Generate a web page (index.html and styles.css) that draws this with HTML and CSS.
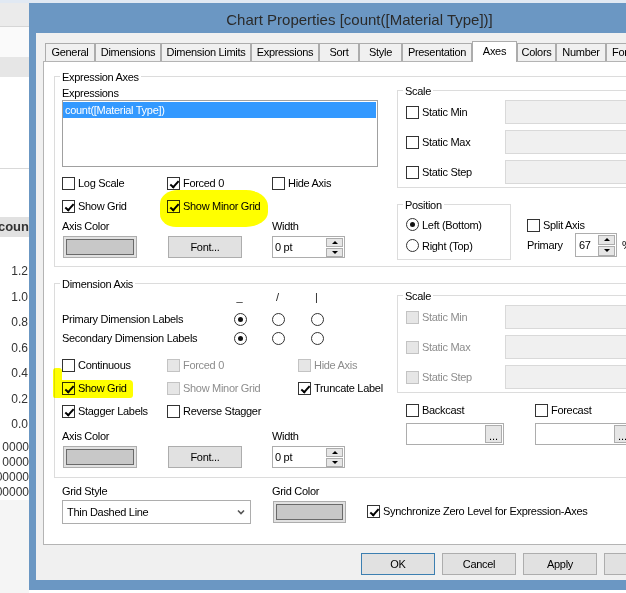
FILE: index.html
```html
<!DOCTYPE html>
<html>
<head>
<meta charset="utf-8">
<title>Chart Properties</title>
<link rel="stylesheet" href="styles.css">
</head>
<body>
<div class="topstrip"></div>
<div class="screen">
  <div class="bgapp">
    <div class="bg-toolbar"></div>
    <div class="bg-w1"></div>
    <div class="bg-band"></div>
    <div class="bg-w2"></div>
    <div class="bg-w3"></div>
    <div class="bg-head">coun</div>
    <div class="bg-gap"></div>
    <div class="bg-num">1.2</div>
    <div class="bg-num">1.0</div>
    <div class="bg-num">0.8</div>
    <div class="bg-num">0.6</div>
    <div class="bg-num">0.4</div>
    <div class="bg-num">0.2</div>
    <div class="bg-num">0.0</div>
    <div class="bg-gap2"></div>
    <div class="bg-row"><span>0000</span></div>
    <div class="bg-row"><span>0000</span></div>
    <div class="bg-row"><span>00000</span></div>
    <div class="bg-row"><span>00000</span></div>
  </div>

  <div class="dialog">
    <div class="titlebar">Chart Properties [count([Material Type])]</div>
    <div class="client">
      <div class="tabs">
        <div class="tab">General</div>
        <div class="tab">Dimensions</div>
        <div class="tab">Dimension Limits</div>
        <div class="tab">Expressions</div>
        <div class="tab">Sort</div>
        <div class="tab">Style</div>
        <div class="tab">Presentation</div>
        <div class="tab sel">Axes</div>
        <div class="tab">Colors</div>
        <div class="tab">Number</div>
        <div class="tab last">Font</div>
      </div>

      <div class="panel">
        <!-- Expression Axes -->
        <div class="group grp-main grp-expr">
          <span class="legend">Expression Axes</span>
          <div class="g-left expr-left">
            <div class="lbl lbl-expr">Expressions</div>
            <div class="listbox"><div class="listitem">count([Material Type])</div></div>
            <div class="cbgrid row13 mt10">
              <div class="chk"><span class="cb"></span>Log Scale</div>
              <div class="chk"><span class="cb on"></span>Forced 0</div>
              <div class="chk"><span class="cb"></span>Hide Axis</div>
            </div>
            <div class="cbgrid row13 mt10">
              <div class="chk"><span class="cb on"></span>Show Grid</div>
              <div class="chk"><span class="cb on"></span>Show Minor Grid</div>
            </div>
            <div class="cbgrid row13 mt7">
              <div class="lbl">Axis Color</div>
              <div></div>
              <div class="lbl">Width</div>
            </div>
            <div class="cbgrid ctrlrow">
              <div class="colorbtn"><span class="swatch"></span></div>
              <div class="btn">Font...</div>
              <div class="spin"><span class="spin-val">0 pt</span><span class="spin-btns"><span class="sb up"></span><span class="sb dn"></span></span></div>
            </div>
          </div>
          <div class="g-right">
            <div class="group scale scale-expr">
              <span class="legend">Scale</span>
              <div class="srow"><div class="chk swide"><span class="cb"></span>Static Min</div><div class="field"></div></div>
              <div class="srow"><div class="chk swide"><span class="cb"></span>Static Max</div><div class="field"></div></div>
              <div class="srow"><div class="chk swide"><span class="cb"></span>Static Step</div><div class="field"></div></div>
            </div>
            <div class="posrow">
              <div class="group pos">
                <span class="legend">Position</span>
                <div class="prow"><span class="rd on"></span>Left (Bottom)</div>
                <div class="prow"><span class="rd"></span>Right (Top)</div>
              </div>
              <div class="split">
                <div class="chk row13"><span class="cb"></span>Split Axis</div>
                <div class="prim-row">
                  <span class="prim-lbl">Primary</span>
                  <div class="spin tall"><span class="spin-val">67</span><span class="spin-btns"><span class="sb up"></span><span class="sb dn"></span></span></div>
                  <span class="pct">%</span>
                </div>
              </div>
            </div>
          </div>
        </div>

        <!-- Dimension Axis -->
        <div class="group grp-main grp-dim">
          <span class="legend">Dimension Axis</span>
          <div class="g-left dim-left">
            <div class="radgrid row13 hdr">
              <div></div><div class="hcell">_</div><div class="hcell">/</div><div class="hcell">|</div>
            </div>
            <div class="radgrid row13 mt9">
              <div class="lbl">Primary Dimension Labels</div>
              <span class="rd on"></span><span class="rd"></span><span class="rd"></span>
            </div>
            <div class="radgrid row13 mt6">
              <div class="lbl">Secondary Dimension Labels</div>
              <span class="rd on"></span><span class="rd"></span><span class="rd"></span>
            </div>
            <div class="cbgrid dimcols row13 mt14">
              <div class="chk"><span class="cb"></span>Continuous</div>
              <div class="chk dis"><span class="cb dis"></span>Forced 0</div>
              <div class="chk dis"><span class="cb dis"></span>Hide Axis</div>
            </div>
            <div class="cbgrid dimcols row13 mt10">
              <div class="chk"><span class="cb on"></span>Show Grid</div>
              <div class="chk dis"><span class="cb dis"></span>Show Minor Grid</div>
              <div class="chk"><span class="cb on"></span>Truncate Label</div>
            </div>
            <div class="cbgrid dimcols row13 mt10">
              <div class="chk"><span class="cb on"></span>Stagger Labels</div>
              <div class="chk"><span class="cb"></span>Reverse Stagger</div>
            </div>
            <div class="cbgrid row13 mt12">
              <div class="lbl">Axis Color</div>
              <div></div>
              <div class="lbl">Width</div>
            </div>
            <div class="cbgrid ctrlrow">
              <div class="colorbtn"><span class="swatch"></span></div>
              <div class="btn">Font...</div>
              <div class="spin"><span class="spin-val">0 pt</span><span class="spin-btns"><span class="sb up"></span><span class="sb dn"></span></span></div>
            </div>
          </div>
          <div class="g-right">
            <div class="group scale scale-dim">
              <span class="legend">Scale</span>
              <div class="srow"><div class="chk swide dis"><span class="cb dis"></span>Static Min</div><div class="field"></div></div>
              <div class="srow"><div class="chk swide dis"><span class="cb dis"></span>Static Max</div><div class="field"></div></div>
              <div class="srow"><div class="chk swide dis"><span class="cb dis"></span>Static Step</div><div class="field"></div></div>
            </div>
            <div class="castrow row13">
              <div class="chk castcol"><span class="cb"></span>Backcast</div>
              <div class="chk"><span class="cb"></span>Forecast</div>
            </div>
            <div class="castfields">
              <div class="bfield"><span class="dots">...</span></div>
              <div class="bfield"><span class="dots">...</span></div>
            </div>
          </div>
        </div>

        <!-- Grid style row -->
        <div class="gridrow">
          <div class="gcolA">
            <div class="lbl row13">Grid Style</div>
            <div class="dropdown">
              <span>Thin Dashed Line</span>
              <svg class="chev" width="8" height="6" viewBox="0 0 8 6"><polyline points="1,1.5 4,4.5 7,1.5" fill="none" stroke="#555" stroke-width="1.6"/></svg>
            </div>
          </div>
          <div class="gcolB">
            <div class="lbl row13">Grid Color</div>
            <div class="colorbtn gc"><span class="swatch"></span></div>
          </div>
          <div class="gcolC">
            <div class="chk row13"><span class="cb on"></span>Synchronize Zero Level for Expression-Axes</div>
          </div>
        </div>
      </div>

      <div class="dbuttons">
        <div class="dbtn def">OK</div>
        <div class="dbtn">Cancel</div>
        <div class="dbtn">Apply</div>
        <div class="dbtn">Help</div>
      </div>
    </div>
  </div>
</div>

<div class="hl hl-1"></div>
<div class="hl hl-2a"></div>
<div class="hl hl-2b"></div>
</body>
</html>
```

FILE: styles.css
```css
html, body {
  margin: 0;
  padding: 0;
}
body {
  width: 626px;
  height: 593px;
  overflow: hidden;
  background: #ffffff;
  font-family: "Liberation Sans", Arial, sans-serif;
  font-size: 11px;
  letter-spacing: -0.3px;
  color: #000;
  position: relative;
}

.topstrip {
  height: 3px;
  background: #e1e9f3;
}
.screen {
  display: flex;
  align-items: flex-start;
}

/* background application (left strip) */
.bgapp {
  width: 29px;
  height: 590px;
  flex: none;
  background: #f5f5f5;
  display: flex;
  flex-direction: column;
  overflow: hidden;
  letter-spacing: 0;
  color: #333;
}
.bg-toolbar { height: 23px; background: #ebebeb; border-bottom: 1px solid #d6d6d6; flex: none; }
.bg-w1 { height: 30px; background: #fafafa; flex: none; }
.bg-band { height: 20px; background: #e6e6e6; flex: none; }
.bg-w2 { height: 91px; background: #fff; border-bottom: 1px solid #d9d9d9; flex: none; }
.bg-w3 { height: 48px; background: #fff; flex: none; }
.bg-head {
  height: 20px; flex: none;
  background: #e1e1e1;
  font-weight: bold; font-size: 13px; line-height: 20px;
  display: flex; justify-content: flex-end;
  white-space: nowrap;
}
.bg-gap { height: 22px; background: #fff; flex: none; }
.bg-num {
  height: 25.5px; line-height: 25.5px; flex: none;
  background: #fff;
  text-align: right; font-size: 12px;
  padding-right: 1px;
}
.bg-gap2 { height: 2px; background: #fff; flex: none; }
.bg-row {
  height: 15px; line-height: 15px; flex: none;
  background: #fff;
  font-size: 12px;
  display: flex; justify-content: flex-end;
  white-space: nowrap;
}

/* dialog frame */
.dialog {
  width: 661px;
  height: 587px;
  flex: none;
  box-sizing: border-box;
  background: #6b97c3;
  padding: 0 7px 10px 7px;
}
.titlebar {
  height: 30px;
  box-sizing: border-box;
  padding-top: 3px;
  line-height: 27px;
  text-align: center;
  font-size: 15px;
  letter-spacing: 0;
  color: #2a2a2a;
}
.client {
  height: 547px;
  box-sizing: border-box;
  background: #f0f0f0;
  padding: 8px 0 0 7px;
}

/* tabs */
.tabs {
  display: grid;
  grid-template-columns: 50px 66px 90px 68px 40px 43px 70px 45px 39px 50px 60px;
  align-items: end;
  height: 20px;
  margin-left: 2px;
  position: relative;
  z-index: 2;
}
.tab {
  height: 18px;
  box-sizing: border-box;
  border: 1px solid #acacac;
  border-bottom: 0;
  background: #f0f0f0;
  text-align: center;
  line-height: 17px;
  white-space: nowrap;
  overflow: hidden;
}
.tab.sel {
  height: 21px;
  margin-bottom: -1px;
  background: #fff;
  line-height: 18px;
}
.tab.last {
  text-align: left;
  padding-left: 5px;
}

.panel {
  height: 484px;
  box-sizing: border-box;
  border: 1px solid #b4b4b4;
  background: #fff;
  position: relative;
  z-index: 1;
}

/* group boxes */
.group {
  position: relative;
  box-sizing: border-box;
  border: 1px solid #dcdcdc;
}
.legend {
  position: absolute;
  top: -6px;
  left: 5px;
  padding: 0 2px;
  line-height: 13px;
  background: #fff;
  white-space: nowrap;
}
.grp-main {
  display: flex;
  margin: 0 10px;
  padding-left: 7px;
}
.grp-expr { margin-top: 14px; }
.grp-dim { margin-top: 16px; }
.g-left { width: 335px; flex: none; }
.expr-left { padding-bottom: 8px; }
.dim-left { padding-bottom: 9px; }
.g-right { flex: 1; min-width: 0; }

.lbl { line-height: 13px; white-space: nowrap; }
.lbl-expr { margin-top: 9px; height: 14px; line-height: 14px; }
.row13 { height: 13px; }
.mt6 { margin-top: 6px; }
.mt7 { margin-top: 7px; }
.mt9 { margin-top: 9px; }
.mt10 { margin-top: 10px; }
.mt12 { margin-top: 12px; }
.mt14 { margin-top: 14px; }

.listbox {
  width: 316px;
  height: 67px;
  box-sizing: border-box;
  border: 1px solid #a0a0a0;
  padding: 1px 1px 0 0;
}
.listitem {
  height: 16px;
  line-height: 16px;
  background: #3399ff;
  color: #fff;
  padding-left: 2px;
}

.cbgrid {
  display: grid;
  grid-template-columns: 105px 105px 105px;
  align-items: center;
}
.cbgrid.dimcols { grid-template-columns: 105px 131px 99px; }
.ctrlrow { margin-top: 3px; height: 22px; }

.chk {
  display: flex;
  align-items: center;
  gap: 3px;
  white-space: nowrap;
  line-height: 13px;
}
.chk.dis { color: #8d8d8d; }

.cb {
  width: 13px;
  height: 13px;
  flex: none;
  box-sizing: border-box;
  border: 1px solid #333;
  background: #fff;
  position: relative;
}
.cb.on::after {
  content: "";
  position: absolute;
  left: 3.5px;
  top: 0.5px;
  width: 3px;
  height: 7px;
  border: solid #000;
  border-width: 0 2px 2px 0;
  transform: rotate(42deg);
}
.cb.dis {
  border-color: #c3c3c3;
  background: #e6e6e6;
}

.rd {
  width: 13px;
  height: 13px;
  flex: none;
  box-sizing: border-box;
  border: 1px solid #333;
  border-radius: 50%;
  background: #fff;
  position: relative;
}
.rd.on::after {
  content: "";
  position: absolute;
  left: 3px;
  top: 3px;
  width: 5px;
  height: 5px;
  border-radius: 50%;
  background: #111;
}

.radgrid {
  display: grid;
  grid-template-columns: 172px 38px 39px 13px;
  align-items: center;
}
.hdr { margin-top: 7px; margin-left: -1px; }
.hcell { width: 13px; text-align: center; line-height: 13px; color: #222; letter-spacing: 0; }

/* controls */
.colorbtn {
  width: 74px;
  height: 22px;
  margin-left: 1px;
  box-sizing: border-box;
  border: 1px solid #adadad;
  background: #e1e1e1;
  padding: 2px;
}
.colorbtn.gc { width: 73px; margin-top: 3px; }
.swatch {
  display: block;
  height: 100%;
  box-sizing: border-box;
  border: 1px solid #6a6a6a;
  background: #c8c8c8;
}
.btn, .dbtn {
  height: 22px;
  box-sizing: border-box;
  border: 1px solid #adadad;
  background: #e1e1e1;
  display: flex;
  align-items: center;
  justify-content: center;
  white-space: nowrap;
}
.btn { width: 74px; margin-left: 1px; }

.spin {
  width: 73px;
  height: 22px;
  box-sizing: border-box;
  border: 1px solid #adadad;
  background: #fff;
  display: flex;
  align-items: center;
  padding-left: 2px;
}
.spin.tall { width: 42px; height: 24px; padding-left: 3px; flex: none; }
.spin-val { flex: 1; white-space: nowrap; }
.spin-btns {
  display: flex;
  flex-direction: column;
  gap: 1px;
  margin-right: 1px;
}
.sb {
  width: 17px;
  height: 9px;
  box-sizing: border-box;
  border: 1px solid #adadad;
  background: #e6e6e6;
  display: flex;
  align-items: center;
  justify-content: center;
}
.spin.tall .sb { height: 10px; }
.sb.up::after {
  content: "";
  border-left: 3px solid transparent;
  border-right: 3px solid transparent;
  border-bottom: 3px solid #000;
}
.sb.dn::after {
  content: "";
  border-left: 3px solid transparent;
  border-right: 3px solid transparent;
  border-top: 3px solid #000;
}

/* scale groups */
.scale { padding: 9px 0 3px 8px; }
.scale-expr { margin-top: 13px; }
.scale-dim { margin-top: 11px; }
.srow {
  display: flex;
  align-items: center;
  height: 24px;
}
.srow + .srow { margin-top: 6px; }
.swide { width: 99px; flex: none; }
.field {
  flex: 1;
  height: 24px;
  box-sizing: border-box;
  border: 1px solid #d9d9d9;
  background: #f0f0f0;
  margin-right: 10px;
}

/* position */
.posrow {
  display: flex;
  margin-top: 16px;
}
.pos {
  width: 114px;
  flex: none;
  padding: 13px 0 7px 8px;
}
.prow {
  display: flex;
  align-items: center;
  gap: 3px;
  height: 13px;
  white-space: nowrap;
}
.prow + .prow { margin-top: 8px; }

.split {
  margin-left: 16px;
  padding-top: 15px;
}
.prim-row {
  display: flex;
  align-items: center;
  height: 24px;
  margin-top: 1px;
}
.prim-lbl { width: 48px; flex: none; }
.pct { margin-left: 5px; }

/* backcast / forecast */
.castrow {
  display: flex;
  align-items: center;
  margin-top: 11px;
  padding-left: 9px;
}
.castcol { width: 129px; flex: none; }
.castfields {
  display: flex;
  gap: 31px;
  margin-top: 6px;
  padding-left: 9px;
}
.bfield {
  width: 98px;
  height: 22px;
  flex: none;
  box-sizing: border-box;
  border: 1px solid #adadad;
  background: #fff;
  display: flex;
  align-items: center;
  justify-content: flex-end;
  padding-right: 1px;
}
.dots {
  width: 17px;
  height: 18px;
  box-sizing: border-box;
  border: 1px solid #adadad;
  background: #e6e6e6;
  display: flex;
  align-items: flex-end;
  justify-content: center;
  line-height: 12px;
  letter-spacing: 0;
}

/* grid style row */
.gridrow {
  display: flex;
  margin-top: 7px;
  padding-left: 18px;
}
.gcolA { width: 210px; flex: none; }
.gcolB { width: 95px; flex: none; }
.gcolC { padding-top: 20px; }
.dropdown {
  width: 189px;
  height: 24px;
  margin-top: 2px;
  box-sizing: border-box;
  border: 1px solid #adadad;
  background: #fff;
  display: flex;
  align-items: center;
  padding-left: 4px;
}
.chev { margin-left: auto; margin-right: 5px; }

/* dialog buttons */
.dbuttons {
  display: flex;
  gap: 7px;
  margin-top: 8px;
  padding-left: 318px;
}
.dbtn { width: 74px; flex: none; }
.dbtn.def { border-color: #3c7fb1; }

/* highlighter marks */
.hl {
  position: absolute;
  background: #ffff00;
  mix-blend-mode: multiply;
  z-index: 5;
}
.hl-1 {
  left: 160px;
  top: 190px;
  width: 108px;
  height: 37px;
  border-radius: 18px 22px 22px 16px / 14px 16px 15px 13px;
}
.hl-2a {
  left: 60px;
  top: 380px;
  width: 73px;
  height: 18px;
  border-radius: 2px 4px 3px 2px;
}
.hl-2b {
  left: 53px;
  top: 368px;
  width: 9px;
  height: 30px;
  border-radius: 3px 3px 2px 2px;
}
```
